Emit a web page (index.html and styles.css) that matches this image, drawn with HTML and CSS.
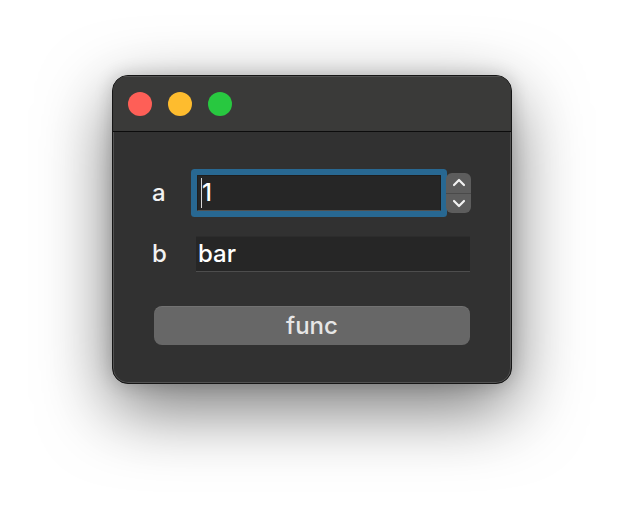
FILE: index.html
```html
<!DOCTYPE html>
<html>
<head>
<meta charset="utf-8">
<link rel="stylesheet" href="styles.css">
</head>
<body>
<div class="window">
  <div class="titlebar">
    <span class="light red"></span>
    <span class="light yellow"></span>
    <span class="light green"></span>
  </div>
  <div class="content">
    <div class="row row-a">
      <span class="label">a</span>
      <div class="field field-a focused"><span class="caret"></span>1</div>
      <div class="stepper">
        <div class="step up"><svg width="14" height="9" viewBox="0 0 14 9"><path d="M2 7 L7 2 L12 7" fill="none" stroke="#f2f2f2" stroke-width="2.2" stroke-linecap="round" stroke-linejoin="round"/></svg></div>
        <div class="step down"><svg width="14" height="9" viewBox="0 0 14 9"><path d="M2 2 L7 7 L12 2" fill="none" stroke="#f2f2f2" stroke-width="2.2" stroke-linecap="round" stroke-linejoin="round"/></svg></div>
      </div>
    </div>
    <div class="row row-b">
      <span class="label">b</span>
      <div class="field field-b">bar</div>
    </div>
    <button class="btn">func</button>
  </div>
</div>
</body>
</html>
```

FILE: styles.css
```css
html, body {
  margin: 0;
  padding: 0;
  background: #ffffff;
}
body {
  width: 624px;
  height: 532px;
  overflow: hidden;
  padding: 75px 0 0 112px;
  box-sizing: border-box;
  font-family: "Inter", "Liberation Sans", sans-serif;
}
.window {
  width: 400px;
  height: 309px;
  box-sizing: border-box;
  border: 1px solid #161616;
  border-radius: 16px;
  background: #313131;
  overflow: hidden;
  box-shadow: inset 0 0 0 1px rgba(255,255,255,0.16), 0 24px 70px rgba(0,0,0,0.55), 0 0 18px rgba(0,0,0,0.18);
  display: flex;
  flex-direction: column;
}
.titlebar {
  height: 55px;
  flex: none;
  background: #3a3a39;
  border-bottom: 1px solid #0c0c0c;
  display: flex;
  align-items: center;
  padding-left: 15px;
  gap: 16px;
  box-shadow: inset 0 1px 0 rgba(255,255,255,0.12);
}
.light {
  width: 24px;
  height: 24px;
  border-radius: 50%;
  display: block;
}
.red { background: #fe5f57; }
.yellow { background: #febc2e; }
.green { background: #28c840; }
.content {
  padding: 41px 0 0 39px;
  display: flex;
  flex-direction: column;
  align-items: flex-start;
}
.row {
  display: flex;
  align-items: center;
}
.label {
  width: 44px;
  color: #f2f2f2;
  font-size: 24px;
  font-weight: 500;
  line-height: 36px;
}
.row-a .label { width: 45px; }
.field {
  height: 36px;
  box-sizing: border-box;
  background: #262626;
  color: #ffffff;
  font-size: 24px;
  font-weight: 500;
  line-height: 34px;
  padding-left: 2px;
  display: flex;
  align-items: center;
}
.field-a {
  width: 244px;
  border: 1px solid #1e1e1e;
  border-bottom-color: #515151;
  border-radius: 1px;
  box-shadow: 0 0 0 6px #286892;
  padding-left: 3px;
}
.caret {
  width: 1px;
  height: 30px;
  background: #d9d9d9;
}
.field-b {
  width: 274px;
  border-top: 1px solid #2c2c2c;
  border-bottom: 1px solid #4d4d4d;
}
.stepper {
  margin-left: 5px;
  width: 25px;
  height: 40px;
  border-radius: 6px;
  background: #5d5d5d;
  display: flex;
  flex-direction: column;
  overflow: hidden;
}
.step {
  flex: 1;
  display: flex;
  align-items: center;
  justify-content: center;
}
.step.up { border-bottom: 1px solid #4a4a4a; }
.row-b { margin-top: 23px; }
.btn {
  margin: 34px 0 0 2px;
  width: 316px;
  height: 39px;
  border: none;
  border-radius: 8px;
  background: #676767;
  color: #e6e6e6;
  font-family: "Inter", "Liberation Sans", sans-serif;
  font-size: 24px;
  font-weight: 500;
  padding: 0;
  box-shadow: inset 0 1px 0 rgba(255,255,255,0.08);
}
```
